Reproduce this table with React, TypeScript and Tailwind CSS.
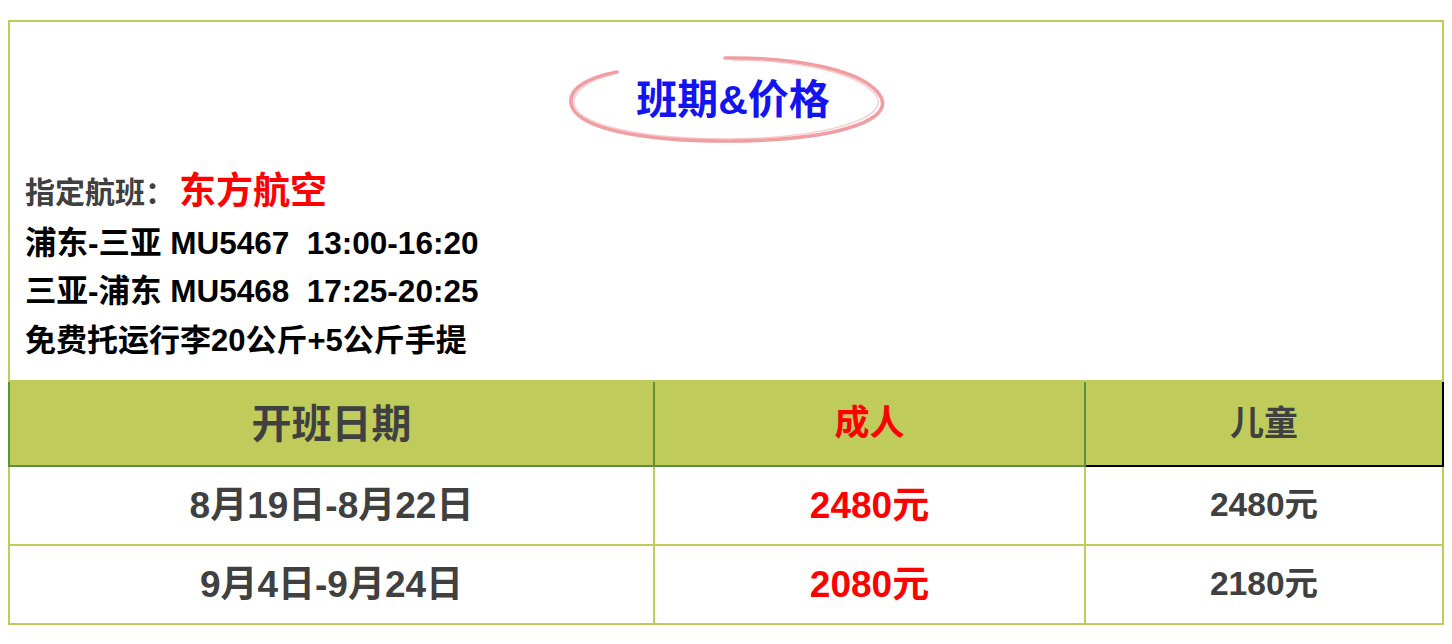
import React from "react";

const FONT = {
  fontFamily: '"Liberation Sans", "Noto Sans CJK SC", sans-serif',
};

type Row = {
  date: string;
  adult: string;
  child: string;
};

const rows: Row[] = [
  { date: "8月19日-8月22日", adult: "2480元", child: "2480元" },
  { date: "9月4日-9月24日", adult: "2080元", child: "2180元" },
];

function PencilOval() {
  return (
    <svg
      viewBox="0 0 320 90"
      className="pointer-events-none absolute inset-0 h-full w-full"
      fill="none"
      aria-hidden="true"
    >
      <path
        d="M159 3 C230 2 300 15 315 42 C328 68 260 86 160 86 C70 86 8 72 5 48 C3 32 25 22 51 17"
        stroke="#f09ea2"
        strokeWidth="3.6"
        strokeLinecap="round"
      />
      <path
        d="M166 5 C232 5 296 18 311 42 C322 64 258 83 162 84 C74 84 11 70 8 48 C7 34 26 24 49 19"
        stroke="#f5b4b7"
        strokeWidth="1.4"
        strokeLinecap="round"
        opacity="0.7"
      />
    </svg>
  );
}

export default function App() {
  return (
    <div className="h-[644px] w-[1452px] bg-white pt-[20px] pl-[8px]" style={FONT}>
      <div className="w-[1436px]">
        {/* top section */}
        <section className="flex h-[360px] flex-col border-x-2 border-t-2 border-[#bfcc5c] pt-[33px] font-bold">
          <div className="relative mx-auto h-[90px] w-[320px]">
            <PencilOval />
            <div className="relative flex h-full items-center justify-center pl-[14px] text-[41px] leading-none text-[#1414f0]">
              班期&amp;价格
            </div>
          </div>

          <div className="pl-[15px]">
            <div className="mt-[19px] flex h-[56px] items-center">
              <span className="text-[30px] text-[#404040]">指定航班：</span>
              <span className="ml-[4px] text-[37px] text-[#ff0000]">东方航空</span>
            </div>
            <div className="flex h-[48px] items-center whitespace-pre text-[31.5px] text-black">
              浦东-三亚 MU5467  13:00-16:20
            </div>
            <div className="flex h-[48px] items-center whitespace-pre text-[31.5px] text-black">
              三亚-浦东 MU5468  17:25-20:25
            </div>
            <div className="flex h-[50px] items-center text-[31px] text-black">
              免费托运行李20公斤+5公斤手提
            </div>
          </div>
        </section>

        {/* price table */}
        <div className="flex h-[87px] bg-[#bfcc5c] pt-[2px] font-bold">
          <div className="flex w-[647px] items-center justify-center border-x-2 border-b-2 border-[#5e8f3e] text-[40px] text-[#404040]">
            开班日期
          </div>
          <div className="flex w-[431px] items-center justify-center border-r-2 border-b-2 border-[#5e8f3e] text-[35px] text-[#ff0000]">
            成人
          </div>
          <div className="flex flex-1 items-center justify-center border-r-2 border-b-2 border-black text-[34px] text-[#404040]">
            儿童
          </div>
        </div>

        {rows.map((row) => (
          <div key={row.date} className="flex h-[79px] font-bold">
            <div className="flex w-[647px] items-center justify-center border-x-2 border-b-2 border-[#bfcc5c] text-[37px] text-[#404040]">
              {row.date}
            </div>
            <div className="flex w-[431px] items-center justify-center border-r-2 border-b-2 border-[#bfcc5c] text-[37px] text-[#ff0000]">
              {row.adult}
            </div>
            <div className="flex flex-1 items-center justify-center border-r-2 border-b-2 border-[#bfcc5c] text-[33.5px] text-[#404040]">
              {row.child}
            </div>
          </div>
        ))}
      </div>
    </div>
  );
}
